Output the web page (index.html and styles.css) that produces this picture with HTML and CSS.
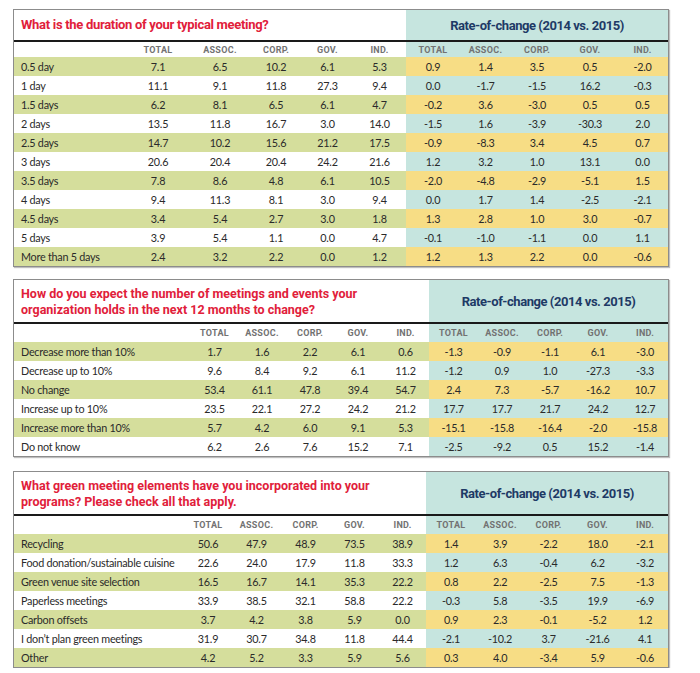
FILE: index.html
```html
<!DOCTYPE html>
<html lang="en">
<head>
<meta charset="utf-8">
<title>Meeting survey tables</title>
<link rel="stylesheet" href="styles.css">
</head>
<body>
<div class="page">

  <div class="panel p1">
    <table>
      <colgroup>
        <col class="c-label"><col class="c1"><col class="c2"><col class="c3"><col class="c4"><col class="c5">
        <col class="r1"><col class="r2"><col class="r3"><col class="r4"><col class="r5">
      </colgroup>
      <tr class="title">
        <th colspan="6" class="q">What is the duration of your typical meeting?</th>
        <th colspan="5" class="rt">Rate-of-change (2014 vs. 2015)</th>
      </tr>
      <tr class="head">
        <th></th><th>TOTAL</th><th>ASSOC.</th><th>CORP.</th><th>GOV.</th><th>IND.</th>
        <th class="r">TOTAL</th><th class="r">ASSOC.</th><th class="r">CORP.</th><th class="r">GOV.</th><th class="r">IND.</th>
      </tr>
      <tr class="g"><td>0.5 day</td><td>7.1</td><td>6.5</td><td>10.2</td><td>6.1</td><td>5.3</td><td>0.9</td><td>1.4</td><td>3.5</td><td>0.5</td><td>-2.0</td></tr>
      <tr class="w"><td>1 day</td><td>11.1</td><td>9.1</td><td>11.8</td><td>27.3</td><td>9.4</td><td>0.0</td><td>-1.7</td><td>-1.5</td><td>16.2</td><td>-0.3</td></tr>
      <tr class="g"><td>1.5 days</td><td>6.2</td><td>8.1</td><td>6.5</td><td>6.1</td><td>4.7</td><td>-0.2</td><td>3.6</td><td>-3.0</td><td>0.5</td><td>0.5</td></tr>
      <tr class="w"><td>2 days</td><td>13.5</td><td>11.8</td><td>16.7</td><td>3.0</td><td>14.0</td><td>-1.5</td><td>1.6</td><td>-3.9</td><td>-30.3</td><td>2.0</td></tr>
      <tr class="g"><td>2.5 days</td><td>14.7</td><td>10.2</td><td>15.6</td><td>21.2</td><td>17.5</td><td>-0.9</td><td>-8.3</td><td>3.4</td><td>4.5</td><td>0.7</td></tr>
      <tr class="w"><td>3 days</td><td>20.6</td><td>20.4</td><td>20.4</td><td>24.2</td><td>21.6</td><td>1.2</td><td>3.2</td><td>1.0</td><td>13.1</td><td>0.0</td></tr>
      <tr class="g"><td>3.5 days</td><td>7.8</td><td>8.6</td><td>4.8</td><td>6.1</td><td>10.5</td><td>-2.0</td><td>-4.8</td><td>-2.9</td><td>-5.1</td><td>1.5</td></tr>
      <tr class="w"><td>4 days</td><td>9.4</td><td>11.3</td><td>8.1</td><td>3.0</td><td>9.4</td><td>0.0</td><td>1.7</td><td>1.4</td><td>-2.5</td><td>-2.1</td></tr>
      <tr class="g"><td>4.5 days</td><td>3.4</td><td>5.4</td><td>2.7</td><td>3.0</td><td>1.8</td><td>1.3</td><td>2.8</td><td>1.0</td><td>3.0</td><td>-0.7</td></tr>
      <tr class="w"><td>5 days</td><td>3.9</td><td>5.4</td><td>1.1</td><td>0.0</td><td>4.7</td><td>-0.1</td><td>-1.0</td><td>-1.1</td><td>0.0</td><td>1.1</td></tr>
      <tr class="g"><td>More than 5 days</td><td>2.4</td><td>3.2</td><td>2.2</td><td>0.0</td><td>1.2</td><td>1.2</td><td>1.3</td><td>2.2</td><td>0.0</td><td>-0.6</td></tr>
    </table>
  </div>

  <div class="panel p2">
    <table>
      <colgroup>
        <col class="c-label"><col class="c1"><col class="c2"><col class="c3"><col class="c4"><col class="c5">
        <col class="r1"><col class="r2"><col class="r3"><col class="r4"><col class="r5">
      </colgroup>
      <tr class="title">
        <th colspan="6" class="q">How do you expect the number of meetings and events your<br>organization holds in the next 12 months to change?</th>
        <th colspan="5" class="rt">Rate-of-change (2014 vs. 2015)</th>
      </tr>
      <tr class="head">
        <th></th><th>TOTAL</th><th>ASSOC.</th><th>CORP.</th><th>GOV.</th><th>IND.</th>
        <th class="r">TOTAL</th><th class="r">ASSOC.</th><th class="r">CORP.</th><th class="r">GOV.</th><th class="r">IND.</th>
      </tr>
      <tr class="g"><td>Decrease more than 10%</td><td>1.7</td><td>1.6</td><td>2.2</td><td>6.1</td><td>0.6</td><td>-1.3</td><td>-0.9</td><td>-1.1</td><td>6.1</td><td>-3.0</td></tr>
      <tr class="w"><td>Decrease up to 10%</td><td>9.6</td><td>8.4</td><td>9.2</td><td>6.1</td><td>11.2</td><td>-1.2</td><td>0.9</td><td>1.0</td><td>-27.3</td><td>-3.3</td></tr>
      <tr class="g"><td>No change</td><td>53.4</td><td>61.1</td><td>47.8</td><td>39.4</td><td>54.7</td><td>2.4</td><td>7.3</td><td>-5.7</td><td>-16.2</td><td>10.7</td></tr>
      <tr class="w"><td>Increase up to 10%</td><td>23.5</td><td>22.1</td><td>27.2</td><td>24.2</td><td>21.2</td><td>17.7</td><td>17.7</td><td>21.7</td><td>24.2</td><td>12.7</td></tr>
      <tr class="g"><td>Increase more than 10%</td><td>5.7</td><td>4.2</td><td>6.0</td><td>9.1</td><td>5.3</td><td>-15.1</td><td>-15.8</td><td>-16.4</td><td>-2.0</td><td>-15.8</td></tr>
      <tr class="w"><td>Do not know</td><td>6.2</td><td>2.6</td><td>7.6</td><td>15.2</td><td>7.1</td><td>-2.5</td><td>-9.2</td><td>0.5</td><td>15.2</td><td>-1.4</td></tr>
    </table>
  </div>

  <div class="panel p3">
    <table>
      <colgroup>
        <col class="c-label"><col class="c1"><col class="c2"><col class="c3"><col class="c4"><col class="c5">
        <col class="r1"><col class="r2"><col class="r3"><col class="r4"><col class="r5">
      </colgroup>
      <tr class="title">
        <th colspan="6" class="q">What green meeting elements have you incorporated into your<br>programs? Please check all that apply.</th>
        <th colspan="5" class="rt">Rate-of-change (2014 vs. 2015)</th>
      </tr>
      <tr class="head">
        <th></th><th>TOTAL</th><th>ASSOC.</th><th>CORP.</th><th>GOV.</th><th>IND.</th>
        <th class="r">TOTAL</th><th class="r">ASSOC.</th><th class="r">CORP.</th><th class="r">GOV.</th><th class="r">IND.</th>
      </tr>
      <tr class="g"><td>Recycling</td><td>50.6</td><td>47.9</td><td>48.9</td><td>73.5</td><td>38.9</td><td>1.4</td><td>3.9</td><td>-2.2</td><td>18.0</td><td>-2.1</td></tr>
      <tr class="w"><td>Food donation/sustainable cuisine</td><td>22.6</td><td>24.0</td><td>17.9</td><td>11.8</td><td>33.3</td><td>1.2</td><td>6.3</td><td>-0.4</td><td>6.2</td><td>-3.2</td></tr>
      <tr class="g"><td>Green venue site selection</td><td>16.5</td><td>16.7</td><td>14.1</td><td>35.3</td><td>22.2</td><td>0.8</td><td>2.2</td><td>-2.5</td><td>7.5</td><td>-1.3</td></tr>
      <tr class="w"><td>Paperless meetings</td><td>33.9</td><td>38.5</td><td>32.1</td><td>58.8</td><td>22.2</td><td>-0.3</td><td>5.8</td><td>-3.5</td><td>19.9</td><td>-6.9</td></tr>
      <tr class="g"><td>Carbon offsets</td><td>3.7</td><td>4.2</td><td>3.8</td><td>5.9</td><td>0.0</td><td>0.9</td><td>2.3</td><td>-0.1</td><td>-5.2</td><td>1.2</td></tr>
      <tr class="w"><td>I don’t plan green meetings</td><td>31.9</td><td>30.7</td><td>34.8</td><td>11.8</td><td>44.4</td><td>-2.1</td><td>-10.2</td><td>3.7</td><td>-21.6</td><td>4.1</td></tr>
      <tr class="g"><td>Other</td><td>4.2</td><td>5.2</td><td>3.3</td><td>5.9</td><td>5.6</td><td>0.3</td><td>4.0</td><td>-3.4</td><td>5.9</td><td>-0.6</td></tr>
    </table>
  </div>

</div>
</body>
</html>
```
FILE: styles.css
```css
html, body {
  margin: 0;
  padding: 0;
  background: #ffffff;
}

.page {
  padding: 9px 0 0 13px;
  display: flex;
  flex-direction: column;
  align-items: flex-start;
  gap: 12px;
}

.p3 {
  margin-top: 2px;
}

.panel {
  border: 1px solid #8c8c8c;
  box-shadow: 1px 1px 1px rgba(0, 0, 0, 0.25);
  background: #ffffff;
}

.panel table {
  width: 654px;
  border-collapse: separate;
  border-spacing: 0;
  table-layout: fixed;
  font-family: "Lato", "Open Sans", sans-serif;
  font-size: 10.8px;
  letter-spacing: -0.25px;
  color: #2a2a2a;
}

.panel td,
.panel th {
  padding: 0;
  text-align: center;
  white-space: nowrap;
}

/* column widths per panel */
.p1 .c-label { width: 112px; }
.p1 .c1 { width: 64px; }
.p1 .c2 { width: 60px; }
.p1 .c3 { width: 52px; }
.p1 .c4 { width: 51px; }
.p1 .c5 { width: 53px; }
.p1 .r1 { width: 54px; }
.p1 .r2 { width: 51px; }
.p1 .r3 { width: 52px; }
.p1 .r4 { width: 54px; }
.p1 .r5 { width: 51px; }

.p2 .c-label { width: 177px; }
.p2 .c1 { width: 47px; }
.p2 .c2 { width: 48px; }
.p2 .c3 { width: 48px; }
.p2 .c4 { width: 48px; }
.p2 .c5 { width: 47px; }
.p2 .r1 { width: 49px; }
.p2 .r2 { width: 48px; }
.p2 .r3 { width: 48px; }
.p2 .r4 { width: 48px; }
.p2 .r5 { width: 46px; }

.p3 .c-label { width: 170px; }
.p3 .c1 { width: 48px; }
.p3 .c2 { width: 49px; }
.p3 .c3 { width: 49px; }
.p3 .c4 { width: 49px; }
.p3 .c5 { width: 47px; }
.p3 .r1 { width: 50px; }
.p3 .r2 { width: 48px; }
.p3 .r3 { width: 49px; }
.p3 .r4 { width: 49px; }
.p3 .r5 { width: 46px; }

/* title row */
.title th {
  border-bottom: 2px solid #1a1a1a;
  height: 30px;
}

.p2 .title th,
.p3 .title th {
  height: 41px;
}

.panel .q {
  text-align: left;
  padding-left: 7px;
  font-family: "Roboto", sans-serif;
  font-weight: 700;
  font-size: 13px;
  letter-spacing: -0.3px;
  line-height: 16px;
  color: #e1203a;
  background: #ffffff;
}

.p2 .q,
.p3 .q {
  font-size: 12.5px;
  letter-spacing: 0;
  padding-top: 1px;
}

.panel .rt {
  background: #c6e5df;
  font-family: "Roboto", sans-serif;
  font-weight: 700;
  font-size: 13px;
  letter-spacing: -0.45px;
  color: #1e3a66;
}

/* column header row */
.head th {
  height: 15px;
  font-family: "Roboto", sans-serif;
  font-weight: 700;
  font-size: 9px;
  letter-spacing: 0.3px;
  color: #727272;
  background: #ffffff;
}

.p2 .head th,
.p3 .head th {
  height: 18px;
}

.head th.r {
  background: #c6e5df;
}

/* data rows */
.g td,
.w td {
  height: 19px;
  line-height: 19px;
}

.g td:first-child,
.w td:first-child {
  text-align: left;
  padding-left: 7px;
}

.g td:nth-child(-n+6) {
  background: #d5de9c;
}

.g td:nth-child(n+7) {
  background: #f7dd85;
}

.w td:nth-child(-n+6) {
  background: #ffffff;
}

.w td:nth-child(n+7) {
  background: #c6e5df;
}
```
